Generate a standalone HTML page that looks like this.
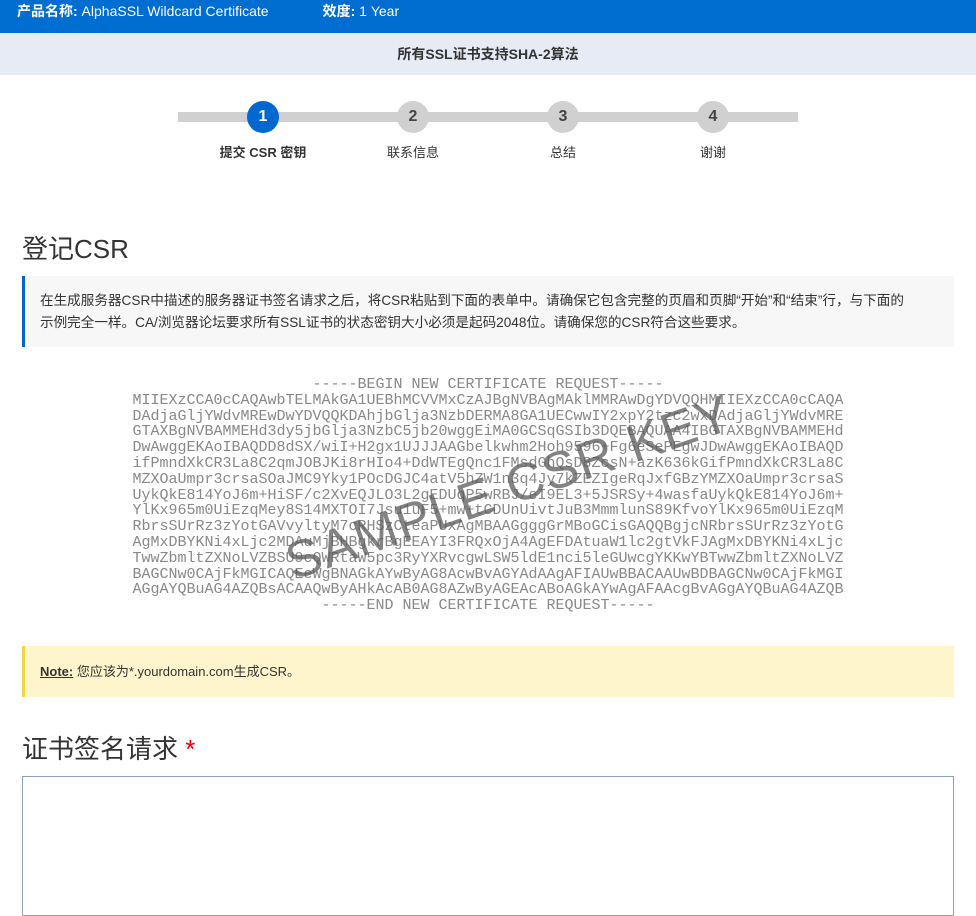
<!DOCTYPE html>
<html><head><meta charset="utf-8"><style>
*{margin:0;padding:0;box-sizing:border-box}
body{width:976px;height:895px;overflow:hidden;background:#fff;font-family:"Liberation Sans","Noto Sans CJK SC",sans-serif;color:#333;position:relative}
.top{position:absolute;left:0;top:0;width:976px;height:33px;background:#006dd0;color:#fff;font-size:14px;line-height:22px;padding-left:17px}
.top b{font-weight:bold}
.band{position:absolute;left:0;top:33px;width:976px;height:42px;background:#e6ebf5;text-align:center;font-size:14px;font-weight:bold;line-height:42px;color:#333}
.line{position:absolute;left:178px;top:112px;width:620px;height:10px;background:#d0d0d0}
.c{position:absolute;top:101px;width:32px;height:32px;border-radius:50%;background:#d0d0d0;color:#444;font-weight:bold;font-size:16px;text-align:center;line-height:32px}
.lab{position:absolute;top:142px;width:140px;text-align:center;font-size:13px;color:#333}
h2{position:absolute;left:22px;font-weight:normal;font-size:26px;color:#333}
.info{position:absolute;left:22px;top:276px;width:932px;height:71px;background:#f7f7f7;border-left:3px solid #0066cc;padding:14px 15px;font-size:13.6px;line-height:22px;color:#333;white-space:nowrap}
pre{position:absolute;left:0;width:976px;top:377px;text-align:center;font-family:"Liberation Mono",monospace;font-size:15px;line-height:15.8px;color:#888}
.wm{position:absolute;left:275px;top:458px;font-size:52px;color:rgba(90,90,90,.75);transform:rotate(-19deg);transform-origin:center;white-space:nowrap;letter-spacing:1px}
.note{position:absolute;left:22px;top:646px;width:932px;height:51px;background:#fff5cc;border-left:3px solid #f5d742;padding:0 15px;line-height:51px;font-size:13px}
.ta{position:absolute;left:22px;top:776px;width:932px;height:140px;border:1px solid #8fa0bf}
</style></head><body>
<div class="top"><b>产品名称:</b> AlphaSSL Wildcard Certificate<span style="display:inline-block;width:54px"></span><b>效度:</b> 1 Year</div>
<div class="band">所有SSL证书支持SHA-2算法</div>
<div class="line"></div>
<div class="c" style="left:247px;background:#0068d0;color:#fff">1</div>
<div class="c" style="left:397px">2</div>
<div class="c" style="left:547px">3</div>
<div class="c" style="left:697px">4</div>
<div class="lab" style="left:193px;font-weight:bold">提交 CSR 密钥</div>
<div class="lab" style="left:343px">联系信息</div>
<div class="lab" style="left:493px">总结</div>
<div class="lab" style="left:643px">谢谢</div>
<h2 style="top:229px">登记CSR</h2>
<div class="info">在生成服务器CSR中描述的服务器证书签名请求之后，将CSR粘贴到下面的表单中。请确保它包含完整的页眉和页脚“开始”和“结束”行，与下面的<br>示例完全一样。CA/浏览器论坛要求所有SSL证书的状态密钥大小必须是起码2048位。请确保您的CSR符合这些要求。</div>
<pre>-----BEGIN NEW CERTIFICATE REQUEST-----
MIIEXzCCA0cCAQAwbTELMAkGA1UEBhMCVVMxCzAJBgNVBAgMAklMMRAwDgYDVQQHMIIEXzCCA0cCAQA
DAdjaGljYWdvMREwDwYDVQQKDAhjbGlja3NzbDERMA8GA1UECwwIY2xpY2tzc2wxDAdjaGljYWdvMRE
GTAXBgNVBAMMEHd3dy5jbGlja3NzbC5jb20wggEiMA0GCSqGSIb3DQEBAQUAA4IBGTAXBgNVBAMMEHd
DwAwggEKAoIBAQDD8dSX/wiI+H2gx1UJJJAAGbelkwhm2Hoh9596+Fg6eSePEgwJDwAwggEKAoIBAQD
ifPmndXkCR3La8C2qmJOBJKi8rHIo4+DdWTEgQnc1FMsdGhQsD8ZcsN+azK636kGifPmndXkCR3La8C
MZXOaUmpr3crsaSOaJMC9Yky1POcDGJC4atV5hZW1n3q4Jy7kZEZIgeRqJxfGBzYMZXOaUmpr3crsaS
UykQkE814YoJ6m+HiSF/c2XvEQJLO3L2gEDUqP5wRBJ/eI9EL3+5JSRSy+4wasfaUykQkE814YoJ6m+
YlKx965m0UiEzqMey8S14MXTOI7Jsu1uF5+mw+tCDUnUivtJuB3MmmlunS89KfvoYlKx965m0UiEzqM
RbrsSUrRz3zYotGAVvyltyM7cRHSzCteaPUxAgMBAAGgggGrMBoGCisGAQQBgjcNRbrsSUrRz3zYotG
AgMxDBYKNi4xLjc2MDAuMjBHBgkrBgEEAYI3FRQxOjA4AgEFDAtuaW1lc2gtVkFJAgMxDBYKNi4xLjc
TwwZbmltZXNoLVZBSU9cQWRtaW5pc3RyYXRvcgwLSW5ldE1nci5leGUwcgYKKwYBTwwZbmltZXNoLVZ
BAGCNw0CAjFkMGICAQEeWgBNAGkAYwByAG8AcwBvAGYAdAAgAFIAUwBBACAAUwBDBAGCNw0CAjFkMGI
AGgAYQBuAG4AZQBsACAAQwByAHkAcAB0AG8AZwByAGEAcABoAGkAYwAgAFAAcgBvAGgAYQBuAG4AZQB
-----END NEW CERTIFICATE REQUEST-----</pre>
<div class="wm">SAMPLE CSR KEY</div>
<div class="note"><b style="text-decoration:underline">Note:</b> 您应该为*.yourdomain.com生成CSR。</div>
<h2 style="top:729px">证书签名请求 <span style="color:#e00">*</span></h2>
<div class="ta"></div>
</body></html>
